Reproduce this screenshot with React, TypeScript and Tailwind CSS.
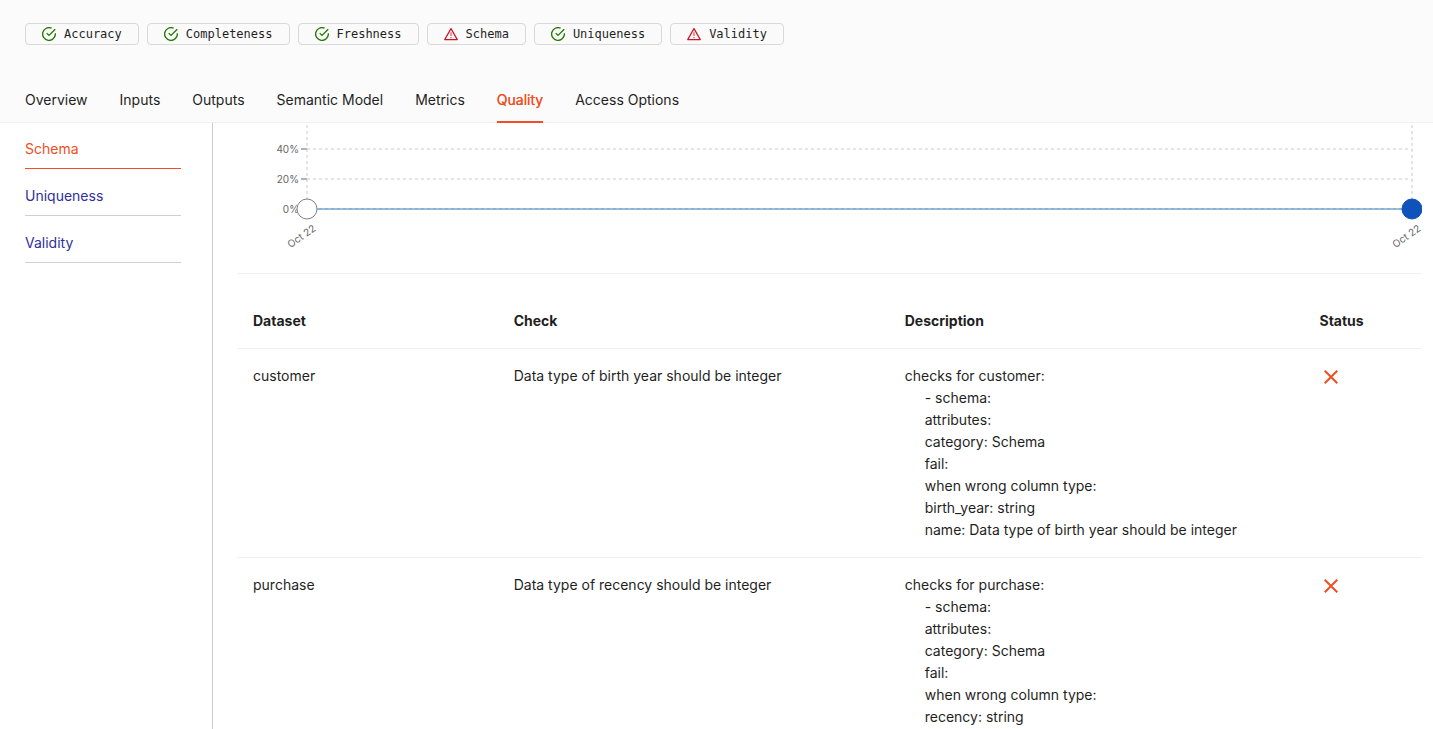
import { MdClose } from "react-icons/md";

interface Tag {
  label: string;
  passed: boolean;
}

interface CheckRow {
  dataset: string;
  check: string;
  description: string[];
}

const TAGS: Tag[] = [
  { label: "Accuracy", passed: true },
  { label: "Completeness", passed: true },
  { label: "Freshness", passed: true },
  { label: "Schema", passed: false },
  { label: "Uniqueness", passed: true },
  { label: "Validity", passed: false },
];

const TABS = ["Overview", "Inputs", "Outputs", "Semantic Model", "Metrics", "Quality", "Access Options"];

const CATEGORIES = ["Schema", "Uniqueness", "Validity"];

const ROWS: CheckRow[] = [
  {
    dataset: "customer",
    check: "Data type of birth year should be integer",
    description: [
      "checks for customer:",
      "- schema:",
      "attributes:",
      "category: Schema",
      "fail:",
      "when wrong column type:",
      "birth_year: string",
      "name: Data type of birth year should be integer",
    ],
  },
  {
    dataset: "purchase",
    check: "Data type of recency should be integer",
    description: [
      "checks for purchase:",
      "- schema:",
      "attributes:",
      "category: Schema",
      "fail:",
      "when wrong column type:",
      "recency: string",
    ],
  },
];

const GRID = [
  { label: "40%", y: 26 },
  { label: "20%", y: 56 },
  { label: "0%", y: 86 },
];

function PassedIcon() {
  return (
    <svg viewBox="1 1 22 22" className="size-[14px] text-[#237804]" fill="none" stroke="currentColor" strokeWidth="2.1">
      <path d="M22 11V12a10 10 0 1 1-5.9-9.1" />
      <path d="M21.8 4.4 12 14.2 8.4 10.6" />
    </svg>
  );
}

function FailedIcon() {
  return (
    <svg viewBox="0 0 14 14" className="size-[14px] text-[#cf1322]" fill="none" stroke="currentColor" strokeWidth="1.2">
      <path d="M7 1.6 13.3 12.6H.7Z" strokeLinejoin="round" />
      <path d="M7 5.2V9M7 10v1.2" strokeWidth="1.1" strokeOpacity="0.8" />
    </svg>
  );
}

function TagList() {
  return (
    <ul className="flex flex-wrap gap-2 pt-[23px]">
      {TAGS.map((tag) => (
        <li
          key={tag.label}
          className="flex h-[22px] items-center gap-2 rounded-[4px] border border-[#d9d9d9] bg-[#fafafa] px-4 font-['DejaVu_Sans_Mono',monospace] text-xs"
        >
          {tag.passed ? <PassedIcon /> : <FailedIcon />}
          {tag.label}
        </li>
      ))}
    </ul>
  );
}

function Tabs() {
  return (
    <nav className="-mb-px flex gap-8">
      {TABS.map((tab) => (
        <button
          key={tab}
          type="button"
          className={
            tab === "Quality"
              ? "border-b-2 border-[#f04e23] pt-3 pb-[10px] text-[#f04e23] [text-shadow:0_0_0.25px_currentColor]"
              : "border-b-2 border-transparent pt-3 pb-[10px]"
          }
        >
          {tab}
        </button>
      ))}
    </nav>
  );
}

function Sidebar() {
  return (
    <aside className="w-[213px] shrink-0 border-r border-[#cccccc] pt-[15px] pr-[31px] pl-[25px]">
      <ul className="space-y-4">
        {CATEGORIES.map((name) => (
          <li key={name}>
            <a
              href="#"
              className={
                name === "Schema"
                  ? "block border-b border-[#f04e23] pb-2 text-[#f04e23]"
                  : "block border-b border-[#d0d0d0] pb-2 text-[#31309c]"
              }
            >
              {name}
            </a>
          </li>
        ))}
      </ul>
    </aside>
  );
}

function DateLabel({ x }: { x: string }) {
  return (
    <svg x={x} y="104" className="overflow-visible">
      <text transform="rotate(-35)" x="6" y="8" textAnchor="end" fill="#666666" className="text-[10px]">
        Oct 22
      </text>
    </svg>
  );
}

// Plot area spans the full svg width; labels and dots spill over into the padding
function TrendChart() {
  return (
    <div className="overflow-hidden border-b border-[#f0f0f0] pr-[10px] pl-[70px]">
      <svg className="block h-[150px] w-full overflow-visible">
        {GRID.map((line) => (
          <g key={line.label}>
            <line x1="0" x2="100%" y1={line.y} y2={line.y} stroke="#cccccc" strokeOpacity="0.5" strokeWidth="2" strokeDasharray="3 3" />
            <line x1="-6" x2="0" y1={line.y} y2={line.y} stroke="#666666" strokeOpacity="0.5" strokeWidth="2" />
            <text x="-8" y={line.y + 4} textAnchor="end" fill="#666666" className="text-[10px]">
              {line.label}
            </text>
          </g>
        ))}
        <line x1="0" x2="0" y1="2" y2="86" stroke="#cccccc" strokeOpacity="0.5" strokeWidth="2" strokeDasharray="3 3" />
        <line x1="100%" x2="100%" y1="2" y2="86" stroke="#cccccc" strokeOpacity="0.5" strokeWidth="2" strokeDasharray="3 3" />
        <line x1="0" x2="100%" y1="86" y2="86" stroke="#3182bd" strokeOpacity="0.5" strokeWidth="2" />
        <circle cx="0" cy="86" r="10" fill="#ffffff" stroke="#808080" />
        <circle cx="100%" cy="86" r="10" fill="#0f52ba" stroke="#0f52ba" />
        <DateLabel x="0" />
        <DateLabel x="100%" />
      </svg>
    </div>
  );
}

function ChecksTable() {
  return (
    <table className="mt-5 w-full table-fixed text-left">
      <thead>
        <tr className="border-b border-[#f0f0f0]">
          <th className="w-[22%] p-4 font-bold">Dataset</th>
          <th className="w-[33%] p-4 font-bold">Check</th>
          <th className="w-[35%] p-4 font-bold">Description</th>
          <th className="w-[10%] p-4 font-bold">Status</th>
        </tr>
      </thead>
      <tbody>
        {ROWS.map((row) => (
          <tr key={row.dataset} className="border-b border-[#f0f0f0] align-top">
            <td className="p-4">{row.dataset}</td>
            <td className="p-4">{row.check}</td>
            <td className="p-4">
              {row.description.map((line, i) => (
                <div key={line} className={i === 0 ? "" : "pl-5"}>
                  {line}
                </div>
              ))}
            </td>
            <td className="p-4">
              <MdClose className="size-6 text-[#f04e23]" aria-label="Failed" />
            </td>
          </tr>
        ))}
      </tbody>
    </table>
  );
}

export default function App() {
  return (
    <div className="flex h-screen flex-col overflow-hidden bg-white font-['Inter',sans-serif] text-sm leading-[22px] text-[#1f1f1f]">
      <header className="border-b border-[#f0f0f0] bg-[#fbfbfb] px-[25px]">
        <TagList />
        <div className="pt-8">
          <Tabs />
        </div>
      </header>
      <div className="flex min-h-0 flex-1">
        <Sidebar />
        <main className="min-w-0 flex-1 overflow-hidden pr-[11px] pl-6">
          <TrendChart />
          <ChecksTable />
        </main>
      </div>
    </div>
  );
}
